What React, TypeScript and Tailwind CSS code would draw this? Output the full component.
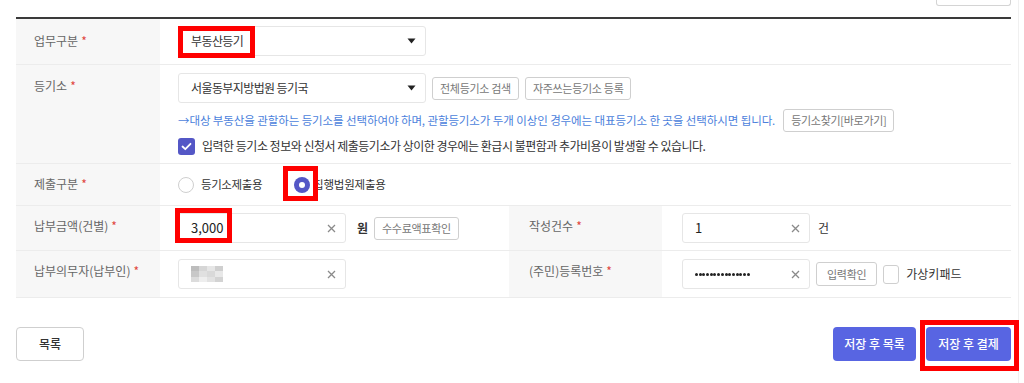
import React from 'react';

const font = { fontFamily: '"Noto Sans CJK KR", "Noto Sans", sans-serif' };

function Star() {
    return <span className="text-[#e0463c] ml-[3px]">*</span>;
}

function Label({ children, className = '' }: { children: React.ReactNode; className?: string }) {
    return (
        <div className={`bg-[#f7f7f7] text-[12px] leading-[18px] text-[#666] pl-[18px] ${className}`}>
            {children}
            <Star />
        </div>
    );
}

function Caret() {
    return (
        <svg width="9" height="6" viewBox="0 0 9 6" className="shrink-0">
            <path d="M0.5 0.5 L8.5 0.5 L4.5 5.5 Z" fill="#222" />
        </svg>
    );
}

function Clear() {
    return (
        <svg width="9" height="9" viewBox="0 0 9 9" className="shrink-0">
            <path d="M1 1 L8 8 M8 1 L1 8" stroke="#8a8a8a" strokeWidth="1.3" />
        </svg>
    );
}

function Select({ value }: { value: string }) {
    return (
        <div className="w-[248px] h-[30px] border border-[#e6e6e6] rounded-[3px] bg-white flex items-center justify-between pl-[12px] pr-[9px] text-[12px] tracking-[-0.6px] text-[#333]">
            <span>{value}</span>
            <Caret />
        </div>
    );
}

function SmallButton({
    children,
    className = '',
    pad = 'px-[7px]',
}: {
    children: React.ReactNode;
    className?: string;
    pad?: string;
}) {
    return (
        <div className={`h-[23px] ${pad} border border-[#cfcfcf] rounded-[3px] bg-white flex items-center text-[11px] tracking-[-0.3px] text-[#777] whitespace-nowrap ${className}`}>
            {children}
        </div>
    );
}

function Input({ children, width }: { children?: React.ReactNode; width: string }) {
    return (
        <div className={`${width} h-[30px] border border-[#e6e6e6] rounded-[3px] bg-white flex items-center justify-between pl-[12px] pr-[9px] text-[13px] text-[#222]`}>
            <div className="flex items-center">{children}</div>
            <Clear />
        </div>
    );
}

function RedBox({ className }: { className: string }) {
    return <div className={`absolute border-[5px] border-[#ff0000] pointer-events-none ${className}`} />;
}

function Mosaic() {
    const cells = [
        '#bdbdbd', '#d6d6d6', '#e6e6e6', '#cfcfcf',
        '#c8c8c8', '#e0e0e0', '#d9d9d9', '#e8e8e8',
        '#dcdcdc', '#eeeeee', '#e2e2e2', '#d3d3d3',
    ];
    return (
        <div className="grid grid-cols-4 w-[32px] h-[16px]">
            {cells.map((c, i) => (
                <div key={i} style={{ backgroundColor: c }} />
            ))}
        </div>
    );
}

function Dots() {
    return (
        <div className="flex gap-[0.7px]">
            {Array.from({ length: 15 }).map((_, i) => (
                <div key={i} className="w-[3px] h-[3px] rounded-full bg-[#222]" />
            ))}
        </div>
    );
}

export default function App() {
    return (
        <div className="w-[1024px] h-[383px] bg-white overflow-hidden relative" style={font}>
            <div className="w-[1019px] h-full border-r border-[#f0f0f0] pl-[16px] pr-[7px]">
                {/* top strip with cut-off button */}
                <div className="h-[17px] flex justify-end">
                    <div className="w-[75px] h-[6px] border-x border-b border-[#d4d4d4] rounded-b-[3px]" />
                </div>

                <div className="border-t-2 border-[#3a3a3a]">
                    {/* 업무구분 */}
                    <div className="flex h-[46px] border-b border-[#ececec]">
                        <Label className="w-[144px] pt-[13px]">업무구분</Label>
                        <div className="flex-1 flex items-center pl-[18px] pb-[1px]">
                            <Select value="부동산등기" />
                        </div>
                    </div>

                    {/* 등기소 */}
                    <div className="flex h-[99px] border-b border-[#ececec]">
                        <Label className="w-[144px] pt-[12px]">등기소</Label>
                        <div className="flex-1 flex flex-col pl-[18px] pt-[8px]">
                            <div className="flex items-center gap-[6px]">
                                <Select value="서울동부지방법원 등기국" />
                                <SmallButton>전체등기소 검색</SmallButton>
                                <SmallButton>자주쓰는등기소 등록</SmallButton>
                            </div>
                            <div className="flex items-center mt-[6px] h-[23px]">
                                <span className="text-[11.5px] tracking-[-0.1px] text-[#4c7fdc]">
                                    →대상 부동산을 관할하는 등기소를 선택하여야 하며, 관할등기소가 두개 이상인 경우에는 대표등기소 한 곳을 선택하시면 됩니다.
                                </span>
                                <SmallButton className="ml-[8px]">등기소찾기[바로가기]</SmallButton>
                            </div>
                            <div className="flex items-center mt-[5px] gap-[7px]">
                                <div className="w-[17px] h-[17px] rounded-[3px] bg-[#5457c6] flex items-center justify-center">
                                    <svg width="11" height="9" viewBox="0 0 11 9">
                                        <path d="M1.5 4.5 L4.3 7.2 L9.5 1.8" stroke="white" strokeWidth="1.8" fill="none" strokeLinecap="round" strokeLinejoin="round" />
                                    </svg>
                                </div>
                                <span className="text-[12px] text-[#333] tracking-[-0.5px]">
                                    입력한 등기소 정보와 신청서 제출등기소가 상이한 경우에는 환급시 불편함과 추가비용이 발생할 수 있습니다.
                                </span>
                            </div>
                        </div>
                    </div>

                    {/* 제출구분 */}
                    <div className="flex h-[42px] border-b border-[#ececec]">
                        <Label className="w-[144px] pt-[11px]">제출구분</Label>
                        <div className="flex-1 flex items-center pl-[18px] text-[11.5px] tracking-[-0.4px] text-[#333]">
                            <div className="w-[16px] h-[16px] rounded-full border border-[#cfcfcf] bg-white" />
                            <span className="ml-[7px]">등기소제출용</span>
                            <div className="ml-[32px] w-[16px] h-[16px] rounded-full bg-[#5457c6] flex items-center justify-center">
                                <div className="w-[6px] h-[6px] rounded-full bg-white" />
                            </div>
                            <span className="ml-[3px] tracking-[-0.2px]">집행법원제출용</span>
                        </div>
                    </div>

                    {/* 납부금액 / 작성건수 */}
                    <div className="flex h-[45px] border-b border-[#ececec]">
                        <Label className="w-[144px] pt-[11px]">납부금액(건별)</Label>
                        <div className="w-[349px] flex items-center pl-[18px]">
                            <Input width="w-[168px]">3,000</Input>
                            <span className="ml-[11px] text-[12px] font-bold text-[#333]">원</span>
                            <SmallButton className="ml-[6px]">수수료액표확인</SmallButton>
                        </div>
                        <Label className="w-[153px] pt-[11px] pl-[20px]">작성건수</Label>
                        <div className="flex-1 flex items-center pl-[20px]">
                            <Input width="w-[128px]">1</Input>
                            <span className="ml-[8px] text-[12px] text-[#333]">건</span>
                        </div>
                    </div>

                    {/* 납부의무자 / 등록번호 */}
                    <div className="flex h-[47px] border-b border-[#ececec]">
                        <Label className="w-[144px] pt-[11px]">납부의무자(납부인)</Label>
                        <div className="w-[349px] flex items-center pl-[18px]">
                            <Input width="w-[168px]">
                                <Mosaic />
                            </Input>
                        </div>
                        <Label className="w-[153px] pt-[11px] pl-[20px]">(주민)등록번호</Label>
                        <div className="flex-1 flex items-center pl-[20px]">
                            <Input width="w-[128px]">
                                <Dots />
                            </Input>
                            <SmallButton className="ml-[6px] h-[24px]" pad="px-[10px]">입력확인</SmallButton>
                            <div className="ml-[6px] w-[16px] h-[19px] border border-[#cfcfcf] rounded-[3px] bg-white" />
                            <span className="ml-[7px] text-[12px] text-[#333]">가상키패드</span>
                        </div>
                    </div>
                </div>

                {/* bottom buttons */}
                <div className="flex justify-between items-center mt-[29px]">
                    <div className="w-[68px] h-[34px] border border-[#cfcfcf] rounded-[4px] flex items-center justify-center text-[12px] text-[#333] font-medium">
                        목록
                    </div>
                    <div className="flex gap-[10px]">
                        <div className="w-[83px] h-[34px] rounded-[4px] bg-[#5865e2] flex items-center justify-center text-[12px] text-white font-medium">
                            저장 후 목록
                        </div>
                        <div className="w-[85px] h-[34px] rounded-[4px] bg-[#5865e2] flex items-center justify-center text-[12px] text-white font-medium">
                            저장 후 결제
                        </div>
                    </div>
                </div>
            </div>

            {/* highlight boxes */}
            <RedBox className="left-[178px] top-[26px] w-[77px] h-[32px]" />
            <RedBox className="left-[283px] top-[166px] w-[35px] h-[35px]" />
            <RedBox className="left-[175px] top-[208px] w-[57px] h-[35px]" />
            <RedBox className="left-[920px] top-[320px] w-[99px] h-[51px]" />
        </div>
    );
}
